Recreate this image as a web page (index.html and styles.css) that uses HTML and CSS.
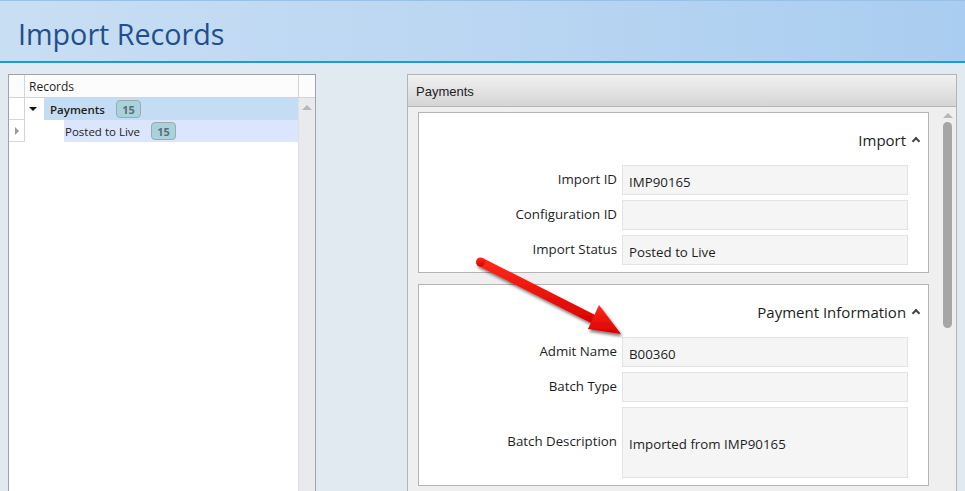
FILE: index.html
```html
<!DOCTYPE html>
<html>
<head>
<meta charset="utf-8">
<link rel="stylesheet" href="styles.css">
</head>
<body>
<header class="topbar"><h1 class="title">Import Records</h1></header>
<main class="main">
  <section class="tree-panel">
    <div class="tree-head">
      <div class="gutter-cell"></div>
      <div class="tree-head-title">Records</div>
      <div class="scroll-head"></div>
    </div>
    <div class="tree-body">
      <div class="gutter">
        <div class="gutter-cell row-cell"></div>
        <div class="gutter-cell row-cell"><span class="row-marker"></span></div>
      </div>
      <div class="tree-rows">
        <div class="tree-row">
          <span class="expander"><span class="down-tri"></span></span>
          <div class="node node-group"><span class="node-label bold">Payments</span><span class="badge">15</span></div>
        </div>
        <div class="tree-row">
          <span class="indent"></span>
          <div class="node node-child"><span class="node-label">Posted to Live</span><span class="badge">15</span></div>
        </div>
      </div>
      <div class="vscroll vscroll-left"><span class="up-arrow"></span></div>
    </div>
  </section>

  <section class="detail-panel">
    <div class="detail-head">Payments</div>
    <div class="detail-body">
      <div class="cards">
        <div class="card">
          <div class="card-title">Import <span class="chev"></span></div>
          <div class="fields">
            <label class="flabel">Import ID</label><div class="fval">IMP90165</div>
            <label class="flabel">Configuration ID</label><div class="fval"></div>
            <label class="flabel">Import Status</label><div class="fval">Posted to Live</div>
          </div>
        </div>
        <div class="card">
          <div class="card-title">Payment Information <span class="chev"></span></div>
          <div class="fields">
            <label class="flabel">Admit Name</label><div class="fval">B00360</div>
            <label class="flabel">Batch Type</label><div class="fval"></div>
            <label class="flabel">Batch Description</label><div class="fval fval-tall">Imported from IMP90165</div>
          </div>
        </div>
      </div>
      <div class="vscroll vscroll-right"><span class="up-arrow"></span><span class="thumb"></span></div>
    </div>
  </section>
</main>
<svg class="callout" width="180" height="110" viewBox="0 0 180 110">
  <defs>
    <linearGradient id="rg" x1="0" y1="0" x2="0" y2="1">
      <stop offset="0" stop-color="#ff2a1a"/>
      <stop offset="1" stop-color="#d80000"/>
    </linearGradient>
    <filter id="sh" x="-20%" y="-20%" width="150%" height="160%">
      <feDropShadow dx="1.5" dy="2.5" stdDeviation="1.6" flood-color="#000" flood-opacity="0.55"/>
    </filter>
  </defs>
  <g filter="url(#sh)" fill="url(#rg)">
    <path d="M18.5 8 L137 68 L133 76 L14.5 16 Z"/>
    <circle cx="16.5" cy="12" r="4.5"/>
    <polygon points="124,79 135,55 157,84"/>
  </g>
</svg>
</body>
</html>
```
FILE: styles.css
```css
* { box-sizing: border-box; }
html, body { margin: 0; padding: 0; height: 100%; overflow: hidden; }
body {
  background: #e1e9f1;
  font-family: "Open Sans", "Noto Sans", sans-serif;
  color: #1e1e1e;
  position: relative;
}
.topbar {
  height: 63px;
  border-top: 1px solid #98c1e8;
  border-bottom: 2px solid #1a9be0;
  background: linear-gradient(to right, #c8def3 0%, #bcd7f2 45%, #a9cdf0 100%);
  padding-left: 18px;
  display: flex;
  align-items: center;
}
.title {
  margin: 0;
  font-weight: 400;
  font-size: 28.7px;
  color: #1f4f8d;
  padding-top: 4px;
}
.main {
  display: flex;
  padding: 11px 0 0 8px;
  gap: 91px;
  height: calc(100% - 63px);
}
/* left tree */
.tree-panel {
  width: 308px;
  border: 1px solid #a0a1a9;
  border-bottom: none;
  background: #fff;
  display: flex;
  flex-direction: column;
  font-size: 11.5px;
}
.tree-head {
  display: flex;
  height: 23px;
  border-bottom: 1px solid #d4d4d4;
  background: #fcfcfc;
}
.gutter-cell {
  width: 16px;
  border-right: 1px solid #d4d4d4;
}
.tree-head-title {
  flex: 1;
  padding-left: 4px;
  line-height: 23px;
  font-size: 12px;
}
.scroll-head {
  width: 17px;
  border-left: 1px solid #d4d4d4;
}
.tree-body {
  flex: 1;
  display: flex;
}
.gutter { width: 16px; }
.row-cell {
  height: 22px;
  border-bottom: 1px solid #d8d8d8;
  display: flex;
  align-items: center;
  justify-content: center;
}
.row-marker {
  width: 0; height: 0;
  border-left: 4px solid #9a9a9a;
  border-top: 4px solid transparent;
  border-bottom: 4px solid transparent;
  margin-left: 1px;
}
.tree-rows { flex: 1; }
.tree-row {
  display: flex;
  height: 22px;
}
.expander {
  width: 19px;
  display: flex;
  align-items: center;
  justify-content: center;
  padding-right: 3px;
  padding-bottom: 1px;
}
.down-tri {
  width: 0; height: 0;
  border-left: 4px solid transparent;
  border-right: 4px solid transparent;
  border-top: 4px solid #111;
}
.indent { width: 39px; }
.node {
  flex: 1;
  display: flex;
  align-items: center;
}
.node-group { background: #c5ddf4; padding-left: 6px; }
.node-child { background: #dbe5fb; padding-left: 1px; }
.node-label.bold { font-weight: 600; }
.badge {
  margin-left: 11px;
  width: 25px;
  height: 18px;
  border: 1px solid #9fa9aa;
  border-radius: 4px;
  background: #a8d3dd;
  color: #5b6d74;
  font-weight: 700;
  font-size: 11px;
  display: flex;
  align-items: center;
  justify-content: center;
  padding-top: 1px;
}
.vscroll {
  width: 17px;
  background: #e9eaed;
  border-left: 1px solid #e0e0e0;
  position: relative;
  display: flex;
  flex-direction: column;
  align-items: center;
}
.up-arrow {
  margin-top: 7px;
  width: 0; height: 0;
  border-left: 5px solid transparent;
  border-right: 5px solid transparent;
  border-bottom: 5px solid #b8b8b8;
}
/* right detail */
.detail-panel {
  width: 550px;
  border: 1px solid #b4b4b4;
  border-bottom: none;
  display: flex;
  flex-direction: column;
  background: #efefef;
}
.detail-head {
  height: 32px;
  background: linear-gradient(#f1f1f1, #d5d5d5);
  border-bottom: 1px solid #b4b4b4;
  font-family: "Liberation Sans", Arial, sans-serif;
  font-size: 13px;
  color: #222;
  padding-left: 8px;
  display: flex;
  align-items: center;
  padding-top: 1px;
}
.detail-body {
  flex: 1;
  display: flex;
}
.cards {
  flex: 1;
  padding: 5px 10px 0 10px;
  display: flex;
  flex-direction: column;
  gap: 11px;
}
.card {
  background: #fff;
  border: 1px solid #b4b4b4;
  padding: 16px 20px 7px 0;
}
.card-title {
  height: 22px;
  text-align: right;
  font-size: 15px;
  line-height: 22px;
  color: #1e1e1e;
  margin-right: -11px;
  margin-bottom: 14px;
  white-space: nowrap;
}
.chev {
  display: inline-block;
  width: 6px; height: 6px;
  border-left: 2px solid #444;
  border-top: 2px solid #444;
  transform: rotate(45deg);
  margin-left: 3px;
  vertical-align: 2px;
}
.fields {
  display: grid;
  grid-template-columns: 198px 1fr;
  column-gap: 5px;
  row-gap: 5px;
}
.flabel {
  font-size: 13.3px;
  text-align: right;
  align-self: center;
  padding-bottom: 3px;
  white-space: nowrap;
}
.fval {
  height: 30px;
  background: #f5f5f5;
  border: 1px solid #e3e3e3;
  font-size: 13.3px;
  padding: 3px 0 0 6px;
  display: flex;
  align-items: center;
}
.fval-tall { height: 71px; }
.vscroll-right {
  border-left: none;
  background: #efefef;
}
.vscroll-right .up-arrow { margin-top: 6px; }
.thumb {
  margin-top: 4px;
  width: 9px;
  height: 206px;
  border-radius: 5px;
  background: #a6a6a6;
}
.callout {
  position: absolute;
  left: 464px;
  top: 250px;
  pointer-events: none;
}
```
